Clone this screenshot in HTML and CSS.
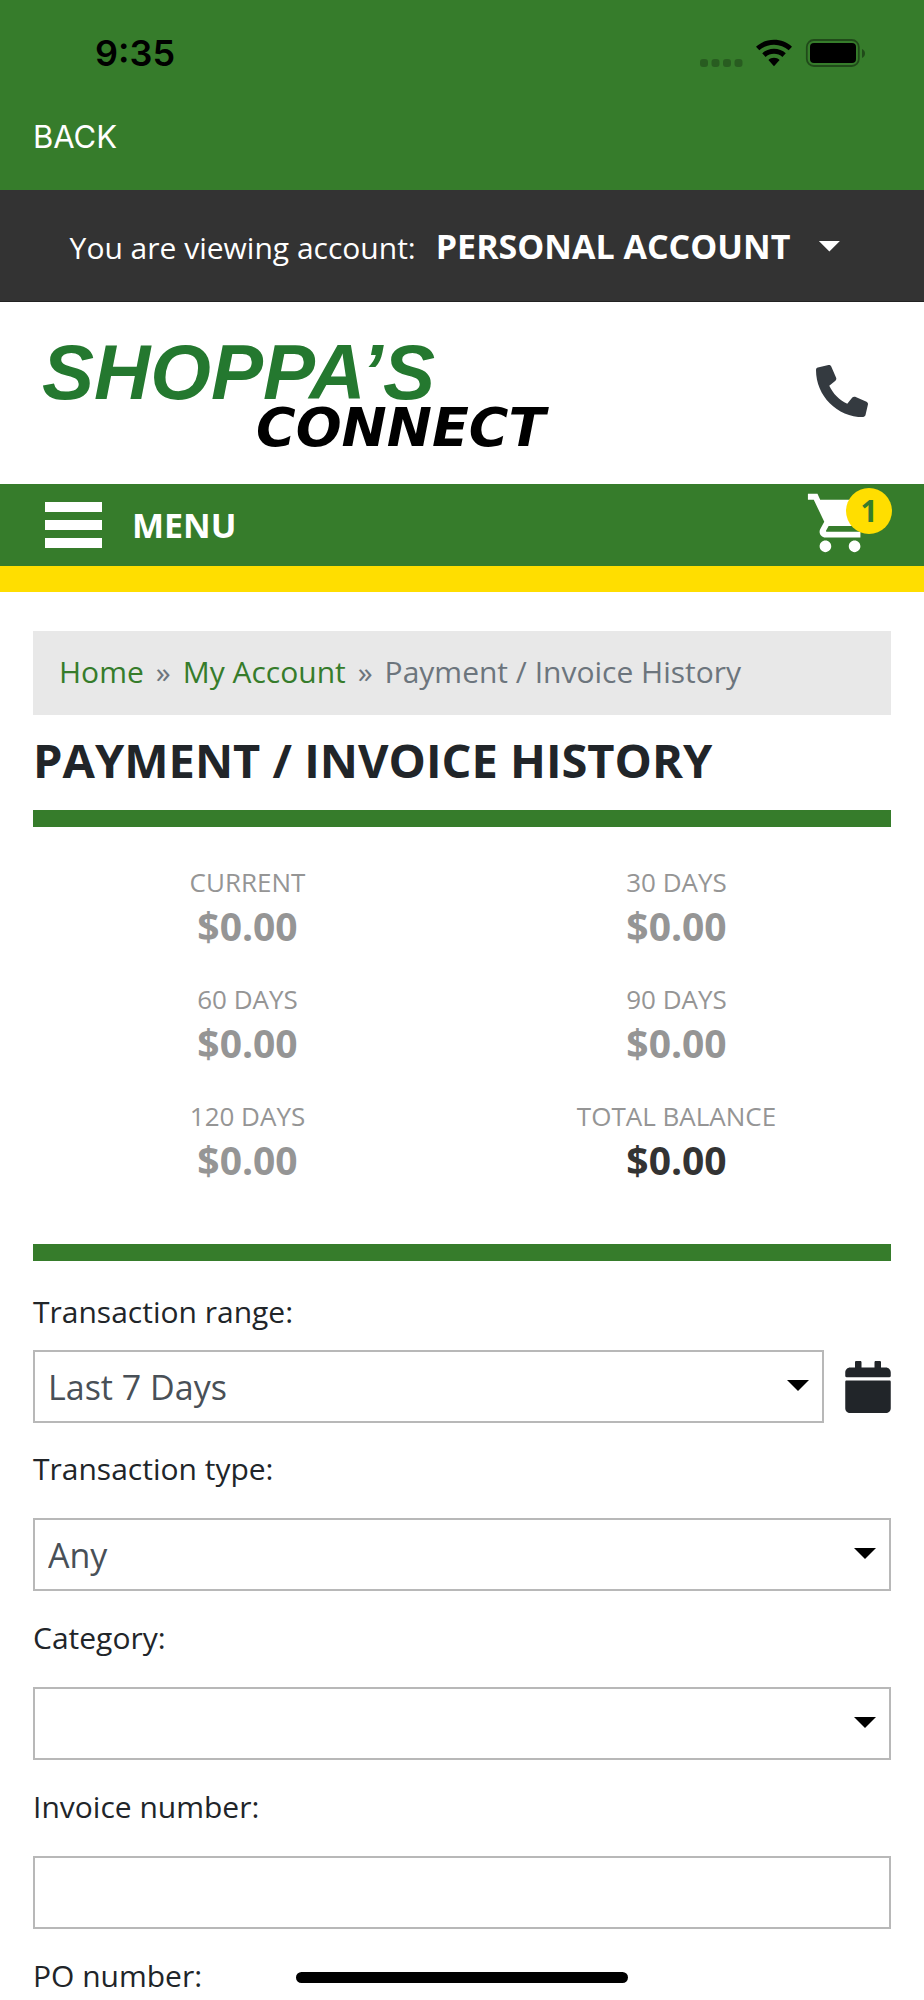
FILE: index.html
```html
<!DOCTYPE html>
<html lang="en">
<head>
<meta charset="utf-8">
<meta name="viewport" content="width=device-width">
<title>Payment / Invoice History</title>
<link rel="stylesheet" href="styles.css">
</head>
<body>
<div class="app-top">
  <div class="status">
    <span class="time">9:35</span>
    <svg class="status-icons" width="166" height="30" viewBox="0 0 166 30" aria-hidden="true">
      <g opacity=".25">
        <rect x="0" y="21" width="8" height="8" rx="3"/>
        <rect x="11.500" y="21" width="8" height="8" rx="3"/>
        <rect x="23" y="21" width="8" height="8" rx="3"/>
        <rect x="34.500" y="21" width="8" height="8" rx="3"/>
      </g>
      <path d="M74 1.800c6.900 0 13.200 2.600 18 6.900l-3.300 3.600c-3.900-3.500-9-5.600-14.700-5.600s-10.800 2.100-14.700 5.600L56 8.700c4.800-4.300 11.100-6.900 18-6.900z"/>
      <path d="M74 10.800c4.500 0 8.600 1.700 11.800 4.500l-3.400 3.700c-2.200-2-5.200-3.200-8.400-3.200s-6.200 1.200-8.400 3.200l-3.400-3.700c3.200-2.800 7.300-4.500 11.800-4.500z"/>
      <path d="M74 19.800c2.200 0 4.100.8 5.600 2.100L74 28.200l-5.600-6.300c1.500-1.300 3.400-2.100 5.600-2.100z"/>
      <rect x="106.800" y="2" width="52" height="26" rx="7" fill="none" stroke="#000" stroke-opacity=".4" stroke-width="1.800"/>
      <rect x="110" y="5" width="46" height="20" rx="4"/>
      <path d="M162 11v9c1.800-.8 3-2.500 3-4.500s-1.200-3.700-3-4.500z" opacity=".4"/>
    </svg>
  </div>
  <button class="back" type="button">BACK</button>
</div>

<div class="account-bar">
  <span id="account-label">You are viewing account:</span>
  <button class="account-button" type="button" aria-describedby="account-label">PERSONAL ACCOUNT<span class="caret"></span></button>
</div>

<header class="masthead">
  <a class="logo" href="#" aria-label="Shoppa's Connect">
    <span class="logo-main">SHOPPA’S</span>
    <span class="logo-sub">CONNECT</span>
  </a>
  <a class="phone" href="#" aria-label="Call us">
    <svg width="52" height="52" viewBox="0 0 512 512"><path fill="#343a40" transform="translate(512 0) scale(-1 1)" d="M493.400 24.600l-104-24c-11.300-2.600-22.900 3.300-27.500 13.900l-48 112c-4.200 9.800-1.400 21.300 6.900 28l60.600 49.600c-36 76.700-98.900 140.500-177.200 177.200l-49.600-60.600c-6.800-8.300-18.200-11.100-28-6.900l-112 48C3.900 366.500-2 378.100.6 389.400l24 104C27.100 504.200 36.700 512 48 512c256.100 0 464-207.500 464-464 0-11.200-7.700-20.900-18.600-23.400z"/></svg>
  </a>
</header>

<nav class="navbar">
  <button class="menu" type="button"><span class="bars"><i></i><i></i><i></i></span>MENU</button>
  <a class="cart" href="#" aria-label="Cart">
    <svg width="70" height="70" viewBox="0 0 24 24"><path fill="#fff" d="M7 18c-1.100 0-1.990.9-1.990 2S5.900 22 7 22s2-.9 2-2-.9-2-2-2zM1 2v2h2l3.600 7.590-1.350 2.450c-.16.28-.25.61-.25.96 0 1.100.9 2 2 2h12v-2H7.420c-.14 0-.25-.11-.25-.25l.03-.12.9-1.630h7.450c.75 0 1.410-.41 1.750-1.030l3.580-6.490c.08-.14.12-.31.12-.48 0-.55-.45-1-1-1H5.210l-.94-2H1zm16 16c-1.100 0-1.990.9-1.990 2s.89 2 1.990 2 2-.9 2-2-.9-2-2-2z"/></svg>
    <span class="badge">1</span>
  </a>
</nav>

<main class="content">
  <nav class="breadcrumb" aria-label="Breadcrumb">
    <a href="#">Home</a><span>»</span><a href="#">My Account</a><span>»</span><span>Payment / Invoice History</span>
  </nav>
  <h1 class="title">PAYMENT / INVOICE HISTORY</h1>

  <dl class="balances">
    <div><dt>CURRENT</dt><dd>$0.00</dd></div>
    <div><dt>30 DAYS</dt><dd>$0.00</dd></div>
    <div><dt>60 DAYS</dt><dd>$0.00</dd></div>
    <div><dt>90 DAYS</dt><dd>$0.00</dd></div>
    <div><dt>120 DAYS</dt><dd>$0.00</dd></div>
    <div class="total"><dt>TOTAL BALANCE</dt><dd>$0.00</dd></div>
  </dl>

  <form class="filters">
    <div class="field field-range">
      <label for="range">Transaction range:</label>
      <div class="range-row">
        <div class="select"><select id="range"><option>Last 7 Days</option></select></div>
        <button class="calendar" type="button" aria-label="Choose dates">
          <svg width="46" height="52" viewBox="0 0 448 512"><path fill="#212529" d="M12 192h424c6.600 0 12 5.400 12 12v260c0 26.500-21.500 48-48 48H48c-26.500 0-48-21.500-48-48V204c0-6.600 5.400-12 12-12zm436-44v-36c0-26.500-21.500-48-48-48h-48V12c0-6.600-5.400-12-12-12h-40c-6.600 0-12 5.400-12 12v52H160V12c0-6.600-5.400-12-12-12h-40c-6.600 0-12 5.400-12 12v52H48C21.500 64 0 85.500 0 112v36c0 6.600 5.400 12 12 12h424c6.600 0 12-5.400 12-12z"/></svg>
        </button>
      </div>
    </div>
    <div class="field">
      <label for="type">Transaction type:</label>
      <div class="select"><select id="type"><option>Any</option></select></div>
    </div>
    <div class="field">
      <label for="category">Category:</label>
      <div class="select"><select id="category"><option></option></select></div>
    </div>
    <div class="field">
      <label for="invoice">Invoice number:</label>
      <input id="invoice" type="text">
    </div>
    <div class="field">
      <label id="po">PO number:</label>
    </div>
  </form>
</main>
<div class="home-indicator"></div>
</body>
</html>
```
FILE: styles.css
```css
* { box-sizing: border-box; }

body {
  margin: 0;
  background: #fff;
  color: #212529;
  font: 30px/44px "Open Sans", sans-serif;
}

a { color: #367c2b; text-decoration: none; }

button {
  padding: 0;
  border: 0;
  background: none;
  color: inherit;
  font: inherit;
}

svg { display: block; }

.app-top {
  padding: 31px 33px;
  background: #367c2b;
  font-family: Inter, sans-serif;
}

.status {
  display: flex;
  align-items: center;
  justify-content: space-between;
  padding: 0 25px 0 62px;
  color: #000;
}

.time { font-size: 36px; font-weight: 600; }

.back {
  display: block;
  margin-top: 40px;
  color: #fff;
  font-size: 31px;
}

.account-bar {
  display: flex;
  align-items: baseline;
  justify-content: center;
  gap: 20px;
  padding: 34px 14px 31px 0;
  border-bottom: 1px solid #222;
  background: #333;
  color: #fff;
}

.account-button {
  display: flex;
  align-items: center;
  gap: 28px;
  font-size: 34px;
  font-weight: 700;
}

.caret {
  width: 22px;
  height: 11px;
  background: #fff;
  clip-path: polygon(0 0, 100% 0, 50% 100%);
}

.masthead {
  display: flex;
  align-items: center;
  justify-content: space-between;
  padding: 38px 56px 32px 42px;
}

.logo { display: grid; }

.logo-main {
  color: #24782f;
  font: italic 700 78px/64px "Liberation Sans", sans-serif;
}

.logo-sub {
  margin-left: 214px;
  color: #000;
  font: italic 700 54px/48px "DejaVu Sans", sans-serif;
}

.phone { margin-bottom: 10px; }

.navbar {
  display: flex;
  align-items: center;
  justify-content: space-between;
  height: 108px;
  padding: 0 32px 0 45px;
  border-bottom: 26px solid #ffde00;
  background: #367c2b;
}

.menu {
  display: flex;
  align-items: center;
  gap: 30px;
  color: #fff;
  font-size: 34px;
  font-weight: 700;
}

.bars { display: grid; gap: 8px; width: 57px; }
.bars i { height: 10px; background: #fff; }

.cart { position: relative; margin-bottom: 4px; padding-right: 17px; }

.badge {
  position: absolute;
  top: 0;
  right: 0;
  width: 46px;
  border-radius: 50%;
  background: #ffde00;
  font-weight: 700;
  line-height: 46px;
  text-align: center;
}

.content { padding: 39px 33px 0; }

.breadcrumb {
  display: flex;
  gap: 12px;
  padding: 19px 26px 21px;
  background: #e8e8e8;
  color: #6c757d;
}

.title {
  margin: 0;
  padding: 15px 0 20px;
  font-size: 47px;
  line-height: 60px;
}

.balances {
  display: grid;
  grid-template-columns: 1fr 1fr;
  row-gap: 29px;
  margin: 0;
  padding: 33px 0 62px;
  border: solid #367c2b;
  border-width: 17px 0;
  color: #959595;
  text-align: center;
}

.balances dt { font-size: 26px; }
.balances dd { margin: 0; font-size: 39px; font-weight: 700; }
.total dd { color: #333; }

.filters { padding-top: 29px; }

.field { display: grid; gap: 27px; margin-bottom: 25px; }
.field-range { gap: 16px; margin-bottom: 24px; }
.field:last-child { margin-bottom: 0; }

.range-row { display: flex; align-items: center; gap: 21px; }

.select { position: relative; flex: 1; }

.select::after {
  content: "";
  position: absolute;
  top: 30px;
  right: 15px;
  width: 22px;
  height: 11px;
  background: #000;
  clip-path: polygon(0 0, 100% 0, 50% 100%);
  pointer-events: none;
}

select, input {
  display: block;
  width: 100%;
  height: 73px;
  padding: 0 13px;
  border: 2px solid #b8b8b8;
  border-radius: 0;
  appearance: none;
  background: #fff;
  color: #495057;
  font: 34px/44px "Open Sans", sans-serif;
}

.home-indicator {
  position: fixed;
  bottom: 17px;
  left: 50%;
  width: 36%;
  height: 11px;
  margin-left: -18%;
  border-radius: 6px;
  background: #000;
}
```
